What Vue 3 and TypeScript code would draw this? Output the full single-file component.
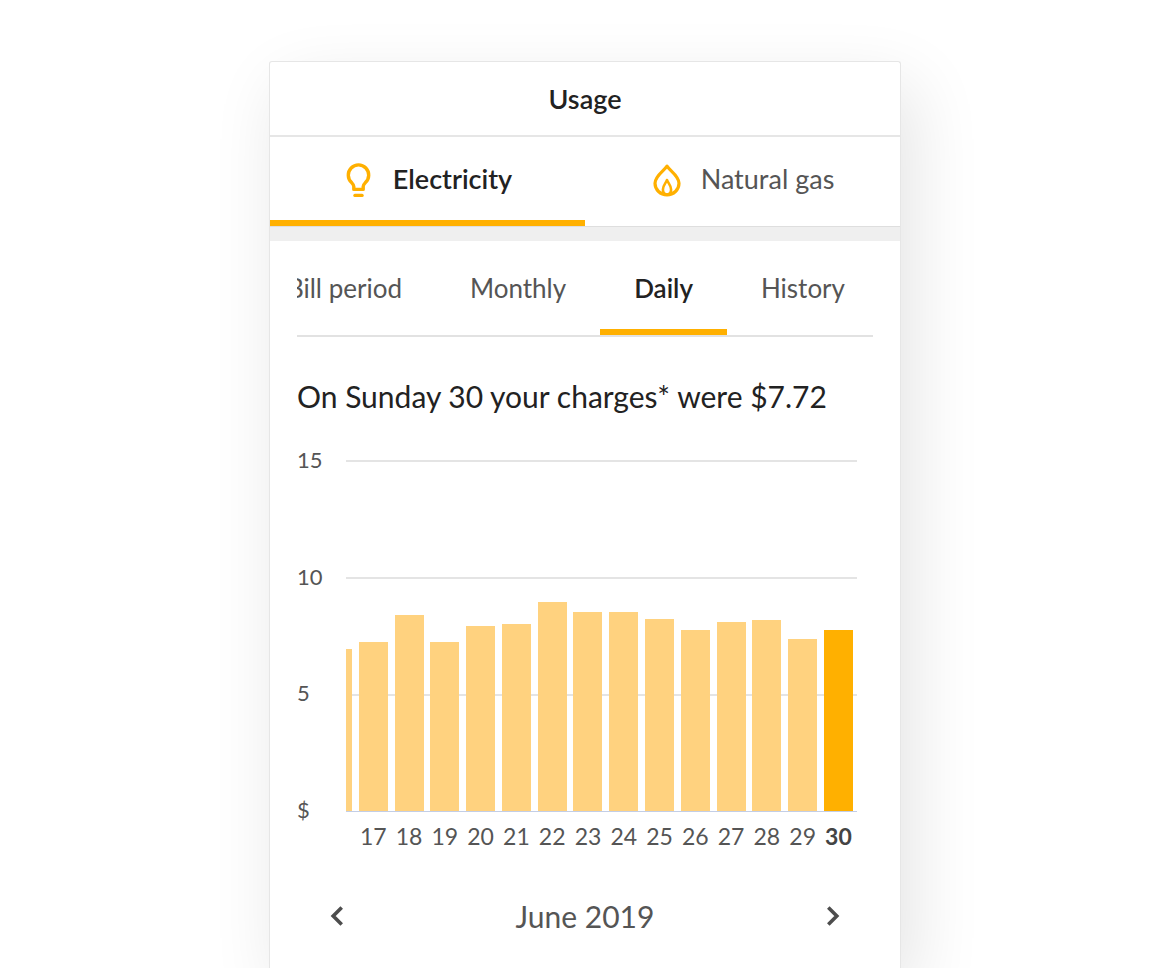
<script setup lang="ts">
import { ref } from 'vue'

interface Day {
  day: number
  cost: number
}

const maxCost = 15
const ticks = ['15', '10', '5', '$']
const periods = ['Bill period', 'Monthly', 'Daily', 'History']

const fuel = ref<'electricity' | 'gas'>('electricity')
const period = ref('Daily')
const selectedDay = ref(30)

const days: Day[] = [
  { day: 16, cost: 6.93 },
  { day: 17, cost: 7.23 },
  { day: 18, cost: 8.37 },
  { day: 19, cost: 7.23 },
  { day: 20, cost: 7.91 },
  { day: 21, cost: 8.0 },
  { day: 22, cost: 8.94 },
  { day: 23, cost: 8.5 },
  { day: 24, cost: 8.5 },
  { day: 25, cost: 8.22 },
  { day: 26, cost: 7.72 },
  { day: 27, cost: 8.07 },
  { day: 28, cost: 8.15 },
  { day: 29, cost: 7.35 },
  { day: 30, cost: 7.72 },
]

const barHeight = (cost: number): string => `${(cost / maxCost) * 100}%`
</script>

<template>
  <main class="page">
    <section class="card">
      <header class="header">
        <h1 class="title">Usage</h1>
      </header>

      <nav class="fuels">
        <button
          type="button"
          class="fuel"
          :class="{ active: fuel === 'electricity' }"
          @click="fuel = 'electricity'"
        >
          <svg class="icon" viewBox="0 0 32 38" fill="none" stroke="#ffb000" aria-hidden="true">
            <path
              d="M10.8 29.4V26.4C10.8 25 9.9 24 8.6 22.6A10.2 10.2 0 1 1 22.4 22.6C21.1 24 20.2 25 20.2 26.4V29.4Z"
              stroke-width="3.4"
              stroke-linejoin="round"
            />
            <path d="M11.9 35.4H19.1" stroke-width="3.2" stroke-linecap="round" />
          </svg>
          <span>Electricity</span>
        </button>
        <button
          type="button"
          class="fuel"
          :class="{ active: fuel === 'gas' }"
          @click="fuel = 'gas'"
        >
          <svg class="icon" viewBox="0 0 32 38" fill="none" stroke="#ffb000" aria-hidden="true">
            <path
              d="M16 6.2C13.2 10.6 4 15.8 4 23.2C4 29.8 9.4 34.8 16 34.8S28 29.8 28 23.2C28 15.8 18.8 10.6 16 6.2Z"
              stroke-width="3.2"
              stroke-linejoin="round"
            />
            <path
              d="M16 20C15 23 11.9 25.2 11.9 29.6C11.9 32.6 13.5 34.6 16 34.6S20.1 32.6 20.1 29.6C20.1 25.2 17 23 16 20Z"
              stroke-width="2.6"
              stroke-linejoin="round"
            />
          </svg>
          <span>Natural gas</span>
        </button>
      </nav>
      <div class="band"></div>

      <div class="body">
        <nav class="periods">
          <button
            v-for="name in periods"
            :key="name"
            type="button"
            class="period"
            :class="{ active: period === name }"
            @click="period = name"
          >
            {{ name }}
          </button>
        </nav>

        <h2 class="summary">On Sunday 30 your charges* were $7.72</h2>

        <div class="chart">
          <div class="ticks">
            <span v-for="tick in ticks" :key="tick">{{ tick }}</span>
          </div>
          <div class="plot">
            <div class="bars">
              <button
                v-for="item in days"
                :key="item.day"
                type="button"
                class="bar"
                :class="{ selected: item.day === selectedDay }"
                :style="{ height: barHeight(item.cost) }"
                :aria-label="`June ${item.day}: $${item.cost.toFixed(2)}`"
                @click="selectedDay = item.day"
              ></button>
            </div>
            <div class="days">
              <span
                v-for="item in days"
                :key="item.day"
                class="day"
                :class="{ selected: item.day === selectedDay }"
                ><template v-if="item.day > 16">{{ item.day }}</template></span
              >
            </div>
          </div>
        </div>

        <div class="month">
          <button type="button" class="arrow" aria-label="Previous month">
            <svg viewBox="0 0 24 24" fill="none" stroke="#4d4d4d" stroke-width="3.6">
              <path d="M16.7 3.5L8.2 12L16.7 20.5" />
            </svg>
          </button>
          <span class="month-name">June 2019</span>
          <button type="button" class="arrow" aria-label="Next month">
            <svg viewBox="0 0 24 24" fill="none" stroke="#4d4d4d" stroke-width="3.6">
              <path d="M7.3 3.5L15.8 12L7.3 20.5" />
            </svg>
          </button>
        </div>
      </div>
    </section>
  </main>
</template>

<style>
body {
  margin: 0;
  background: #fff;
}
</style>

<style scoped>
.page {
  box-sizing: border-box;
  min-height: 100vh;
  padding-top: 61px;
  display: flex;
  justify-content: center;
  overflow: hidden;
  font-family: Lato, 'Open Sans', sans-serif;
  color: #222;
}

button {
  margin: 0;
  padding: 0;
  border: 0;
  background: none;
  font: inherit;
  color: inherit;
  cursor: pointer;
}

.card {
  box-sizing: border-box;
  width: 100%;
  max-width: 632px;
  border: 1px solid #e6e6e6;
  border-bottom: 0;
  border-radius: 3px 3px 0 0;
  background: #fff;
  box-shadow: 12px 24px 70px rgba(0, 0, 0, 0.11);
}

.header {
  height: 73px;
  display: flex;
  align-items: center;
  justify-content: center;
  border-bottom: 2px solid #e6e6e6;
}

.title {
  margin: 0;
  font-size: 27px;
  line-height: 32px;
  font-weight: 600;
}

.fuels {
  display: flex;
  border-bottom: 1px solid #dedede;
}

.fuel {
  flex: 1;
  height: 89px;
  box-sizing: border-box;
  display: flex;
  align-items: center;
  justify-content: center;
  gap: 18px;
  border-bottom: 6px solid transparent;
  font-size: 27px;
  line-height: 32px;
  color: #555;
}

.fuel.active {
  border-bottom-color: #ffb000;
  font-weight: 600;
  color: #222;
}

.band {
  height: 14px;
  background: #efefef;
}

.icon {
  width: 32px;
  height: 38px;
}

.body {
  padding: 0 27px;
}

.periods {
  display: flex;
  justify-content: flex-end;
  overflow: hidden;
  border-bottom: 2px solid #e2e2e2;
}

.period {
  flex: none;
  padding: 31px 34px 25px;
  border-bottom: 6px solid transparent;
  font-size: 26px;
  line-height: 32px;
  color: #555;
}

.period:last-child {
  padding-right: 28px;
}

.period.active {
  border-bottom-color: #ffb000;
  font-weight: 600;
  color: #222;
}

.summary {
  margin: 40px 0 0;
  font-size: 30px;
  line-height: 38px;
  font-weight: 400;
}

.chart {
  margin-top: 45px;
  display: flex;
  color: #555;
  font-size: 23px;
  line-height: 28px;
}

.ticks {
  width: 49px;
  height: 378px;
  margin-top: -14px;
  display: flex;
  flex-direction: column;
  justify-content: space-between;
  font-size: 22px;
}

.plot {
  flex: 1;
  min-width: 0;
  margin-right: 16px;
}

.bars {
  height: 351px;
  padding-right: 4px;
  display: flex;
  align-items: flex-end;
  justify-content: space-between;
  border-bottom: 1px solid #c3cee6;
  background: repeating-linear-gradient(to bottom, #e4e4e4 0 2px, transparent 2px 117px);
}

.bar {
  width: 29px;
  background: #ffd27f;
}

.bar:first-child,
.day:first-child {
  width: 6px;
}

.bar.selected {
  background: #ffb000;
}

.days {
  margin-top: 10px;
  padding-right: 4px;
  display: flex;
  justify-content: space-between;
}

.day {
  width: 29px;
  display: flex;
  justify-content: center;
}

.day.selected {
  font-weight: 700;
  color: #444;
}

.month {
  margin-top: 47px;
  padding: 0 28px;
  display: flex;
  align-items: center;
  justify-content: space-between;
  color: #555;
  font-size: 30px;
  line-height: 38px;
}

.arrow,
.arrow svg {
  display: block;
  width: 24px;
  height: 24px;
}
</style>
